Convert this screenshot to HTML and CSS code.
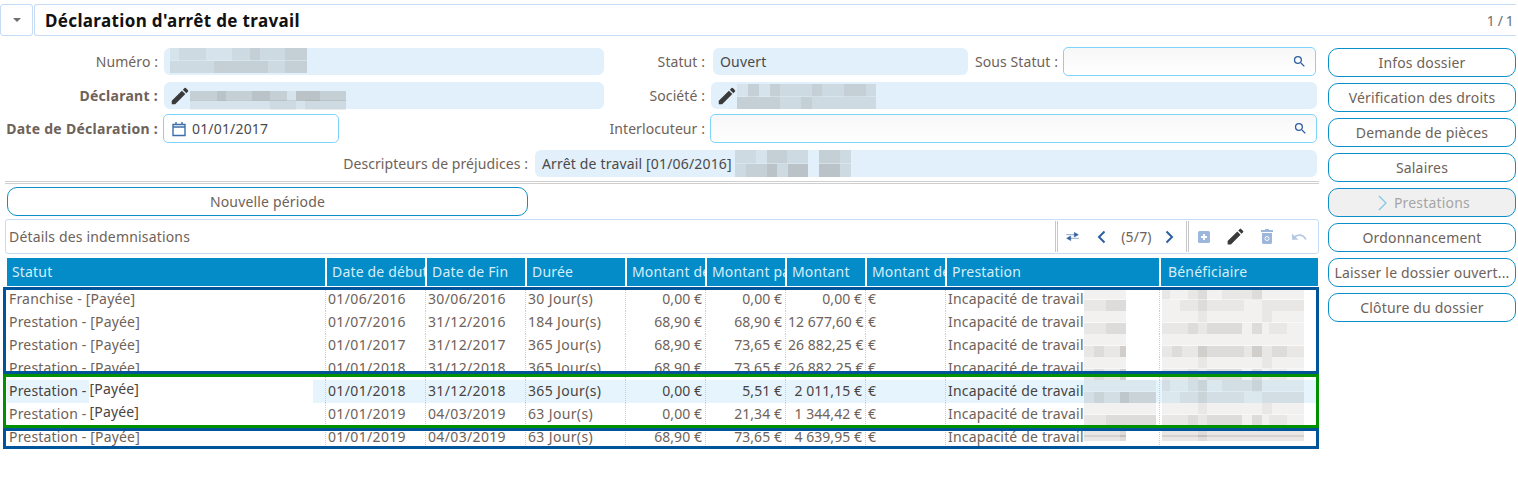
FILE: index.html
```html
<!DOCTYPE html>
<html lang="fr">
<head>
    <meta charset="UTF-8">
    <title>Déclaration d'arrêt de travail</title>
    <link rel="stylesheet" href="styles.css">
</head>
<body>
    <svg class="defs" width="0" height="0">
        <symbol id="i-pencil" viewBox="0 0 24 24"><path d="M3 17.25V21h3.75L17.81 9.94l-3.75-3.75L3 17.25zM20.71 7.04a1 1 0 0 0 0-1.41l-2.34-2.34a1 1 0 0 0-1.41 0l-1.83 1.83 3.75 3.75 1.83-1.83z"/></symbol>
        <symbol id="i-search" viewBox="0 0 24 24"><path d="M15.5 14h-.79l-.28-.27A6.47 6.47 0 0 0 16 9.5 6.5 6.5 0 1 0 9.5 16c1.61 0 3.09-.59 4.23-1.57l.27.28v.79l5 4.99L20.49 19l-4.99-5zm-6 0C7.01 14 5 11.99 5 9.5S7.01 5 9.5 5 14 7.01 14 9.5 11.99 14 9.5 14z"/></symbol>
    </svg>

    <header class="topbar">
        <div class="topbar-toggle"><span class="caret"></span></div>
        <div class="topbar-title">
            <h1>Déclaration d'arrêt de travail</h1>
            <span class="pager-count">1 / 1</span>
        </div>
    </header>

    <div class="layout">
        <main class="content">
            <section class="form">
                <div class="form-row">
                    <label class="lbl lbl-first">Numéro :</label>
                    <div class="field field-wide"><span class="mosaic m-num"></span></div>
                    <label class="lbl lbl-second">Statut :</label>
                    <div class="field field-statut">Ouvert</div>
                    <label class="lbl lbl-sous">Sous Statut :</label>
                    <div class="input input-sous"><svg class="ico-search"><use href="#i-search"/></svg></div>
                </div>
                <div class="form-row">
                    <label class="lbl lbl-first lbl-bold">Déclarant :</label>
                    <div class="field field-wide field-icon">
                        <svg class="ico-pencil"><use href="#i-pencil"/></svg>
                        <span class="mosaic m-decl"></span>
                    </div>
                    <label class="lbl lbl-second">Société :</label>
                    <div class="field field-societe field-icon">
                        <svg class="ico-pencil"><use href="#i-pencil"/></svg>
                        <span class="mosaic m-soc"></span>
                    </div>
                </div>
                <div class="form-row">
                    <label class="lbl lbl-first lbl-bold">Date de Déclaration :</label>
                    <div class="input input-date">
                        <svg class="ico-cal" viewBox="0 0 14 16"><path d="M1 3.5h12v11H1zM1 6h12M4 1v2.5M10 1v2.5" fill="none" stroke="#3d6ea8" stroke-width="1.4"/></svg>
                        01/01/2017
                    </div>
                    <label class="lbl lbl-inter">Interlocuteur :</label>
                    <div class="input input-inter"><svg class="ico-search"><use href="#i-search"/></svg></div>
                </div>
                <div class="form-row">
                    <label class="lbl lbl-desc">Descripteurs de préjudices :</label>
                    <div class="field field-desc">Arrêt de travail [01/06/2016]<span class="mosaic m-desc"></span></div>
                </div>
            </section>

            <div class="sep"></div>

            <button class="btn btn-new">Nouvelle période</button>

            <div class="panel">
                <span class="panel-title">Détails des indemnisations</span>
                <div class="tools tools-nav">
                    <svg class="tool t-swap" viewBox="0 0 14 10"><path d="M0 3h9V0.5L13.5 3 9 5.500V3M14 7H5V4.500L0.500 7 5 9.500V7" fill="#2f5f9f" stroke="#2f5f9f" stroke-width=".6"/></svg>
                    <svg class="tool t-prev" viewBox="0 0 9 14"><path d="M7.500 1.500 2 7l5.500 5.500" fill="none" stroke="#2f5f9f" stroke-width="2"/></svg>
                    <span class="tool-count">(5/7)</span>
                    <svg class="tool t-next" viewBox="0 0 9 14"><path d="M1.500 1.500 7 7l-5.500 5.500" fill="none" stroke="#2f5f9f" stroke-width="2"/></svg>
                </div>
                <div class="tools tools-edit">
                    <svg class="tool t-add" viewBox="0 0 12 12"><rect width="12" height="12" rx="1.500" fill="#9db7dc"/><path d="M6 3v6M3 6h6" stroke="#fff" stroke-width="1.800"/></svg>
                    <svg class="tool t-edit"><use href="#i-pencil"/></svg>
                    <svg class="tool t-trash" viewBox="0 0 12 15"><path d="M4 0h4v1h4v2H0V1h4zM1 4h10v9.500a1.500 1.500 0 0 1-1.500 1.500h-7A1.500 1.500 0 0 1 1 13.500z" fill="#9db7dc"/><circle cx="6" cy="9.500" r="2" fill="none" stroke="#fff"/></svg>
                    <svg class="tool t-undo" viewBox="2 7 21 10"><path fill="#b4c8e4" d="M12.500 8c-2.650 0-5.050.990-6.900 2.600L2 7v9h9l-3.620-3.620c1.390-1.160 3.160-1.880 5.120-1.880 3.540 0 6.550 2.310 7.600 5.500l2.370-.780C21.080 11.030 17.150 8 12.500 8z"/></svg>
                </div>
            </div>

            <div class="grid-wrap">
                <table class="grid">
                    <colgroup>
                        <col class="c-statut"><col class="c-date"><col class="c-date"><col class="c-date">
                        <col class="c-mt"><col class="c-mt"><col class="c-mt"><col class="c-mt">
                        <col class="c-prest"><col class="c-benef">
                    </colgroup>
                    <thead>
                        <tr>
                            <th>Statut</th>
                            <th>Date de début</th>
                            <th>Date de Fin</th>
                            <th>Durée</th>
                            <th>Montant de base</th>
                            <th>Montant payé</th>
                            <th>Montant</th>
                            <th>Montant de la</th>
                            <th>Prestation</th>
                            <th class="th-benef">Bénéficiaire</th>
                        </tr>
                    </thead>
                    <tbody>
                        <tr>
                            <td>Franchise - [Payée]</td><td>01/06/2016</td><td>30/06/2016</td><td>30 Jour(s)</td>
                            <td class="num">0,00 €</td><td class="num">0,00 €</td><td class="num">0,00 €</td><td>€</td>
                            <td>Incapacité de travail<span class="mosaic m-pre m-a"></span></td>
                            <td><span class="mosaic m-ben m-b"></span></td>
                        </tr>
                        <tr>
                            <td>Prestation - [Payée]</td><td>01/07/2016</td><td>31/12/2016</td><td>184 Jour(s)</td>
                            <td class="num">68,90 €</td><td class="num">68,90 €</td><td class="num">12 677,60 €</td><td>€</td>
                            <td>Incapacité de travail<span class="mosaic m-pre m-a"></span></td>
                            <td><span class="mosaic m-ben m-c"></span></td>
                        </tr>
                        <tr>
                            <td>Prestation - [Payée]</td><td>01/01/2017</td><td>31/12/2017</td><td>365 Jour(s)</td>
                            <td class="num">68,90 €</td><td class="num">73,65 €</td><td class="num">26 882,25 €</td><td>€</td>
                            <td>Incapacité de travail<span class="mosaic m-pre m-d"></span></td>
                            <td><span class="mosaic m-ben m-d"></span></td>
                        </tr>
                        <tr>
                            <td>Prestation - [Payée]</td><td>01/01/2018</td><td>31/12/2018</td><td>365 Jour(s)</td>
                            <td class="num">68,90 €</td><td class="num">73,65 €</td><td class="num">26 882,25 €</td><td>€</td>
                            <td>Incapacité de travail<span class="mosaic m-pre m-d"></span></td>
                            <td><span class="mosaic m-ben m-c"></span></td>
                        </tr>
                        <tr class="row-active">
                            <td>Prestation -<span class="paste paste-white">[Payée]</span></td><td>01/01/2018</td><td>31/12/2018</td><td>365 Jour(s)</td>
                            <td class="num">0,00 €</td><td class="num">5,51 €</td><td class="num">2 011,15 €</td><td>€</td>
                            <td>Incapacité de travail<span class="mosaic m-wide m-d"></span></td>
                            <td><span class="mosaic m-ben m-b"></span></td>
                        </tr>
                        <tr>
                            <td>Prestation -<span class="paste">[Payée]</span></td><td>01/01/2019</td><td>04/03/2019</td><td>63 Jour(s)</td>
                            <td class="num">0,00 €</td><td class="num">21,34 €</td><td class="num">1 344,42 €</td><td>€</td>
                            <td>Incapacité de travail<span class="mosaic m-wide m-a"></span></td>
                            <td><span class="mosaic m-ben m-c"></span></td>
                        </tr>
                        <tr>
                            <td>Prestation - [Payée]</td><td>01/01/2019</td><td>04/03/2019</td><td>63 Jour(s)</td>
                            <td class="num">68,90 €</td><td class="num">73,65 €</td><td class="num">4 639,95 €</td><td>€</td>
                            <td>Incapacité de travail<span class="mosaic m-pre m-low"></span></td>
                            <td><span class="mosaic m-ben m-low"></span></td>
                        </tr>
                    </tbody>
                </table>
                <div class="frame frame-top"></div>
                <div class="frame frame-bottom"></div>
                <div class="frame frame-green"></div>
            </div>
        </main>

        <aside class="actions">
            <button class="btn">Infos dossier</button>
            <button class="btn">Vérification des droits</button>
            <button class="btn">Demande de pièces</button>
            <button class="btn">Salaires</button>
            <button class="btn btn-off">
                <svg class="ico-chev" viewBox="0 0 9 16"><path d="M1 1l7 7-7 7" fill="none" stroke="#7fc4ea" stroke-width="1.200"/></svg>
                Prestations
            </button>
            <button class="btn">Ordonnancement</button>
            <button class="btn">Laisser le dossier ouvert...</button>
            <button class="btn">Clôture du dossier</button>
        </aside>
    </div>
</body>
</html>
```

FILE: styles.css
```css
* {
    box-sizing: border-box;
}

body {
    margin: 0;
    background: #fff;
    font-family: "Noto Sans", sans-serif;
    font-size: 14px;
    letter-spacing: .17px;
    color: #6e6259;
    overflow: hidden;
}

.defs {
    position: absolute;
}

/* top bar */
.topbar {
    display: flex;
    width: 1516px;
    height: 32px;
    margin-top: 4px;
    gap: 1px;
}

.topbar-toggle {
    width: 33px;
    border: 1px solid #c6dcf5;
    border-radius: 3px;
    display: flex;
    align-items: center;
    justify-content: center;
}

.caret {
    width: 0;
    height: 0;
    border-left: 4px solid transparent;
    border-right: 4px solid transparent;
    border-top: 4px solid #6e6e6e;
}

.topbar-title {
    flex: 1;
    display: flex;
    align-items: center;
    justify-content: space-between;
    border: 1px solid #c6dcf5;
    border-right: 0;
    border-radius: 3px 0 0 3px;
    padding: 0 2px 0 10px;
}

.topbar-title h1 {
    margin: 0;
    font-size: 17px;
    font-weight: 700;
    letter-spacing: .35px;
    color: #111;
}

.pager-count {
    color: #6e6e6e;
    word-spacing: -1px;
}

.layout {
    display: flex;
}

.content {
    width: 1328px;
}

/* form */
.form {
    display: grid;
    grid-template-rows: 34px 33px 35px 29px;
    margin-top: 11px;
    height: 131px;
}

.form-row {
    display: flex;
    align-items: center;
    height: 29px;
}

.lbl {
    text-align: right;
    white-space: nowrap;
    flex: none;
    letter-spacing: .08px;
}

.lbl-bold {
    font-weight: 700;
    letter-spacing: .28px;
}

.lbl-first {
    width: 158px;
    margin-right: 6px;
}

.lbl-second {
    width: 101px;
    margin-right: 8px;
}

.lbl-sous {
    width: 84px;
    margin-left: 6px;
    margin-right: 5px;
}

.lbl-inter {
    width: 366px;
    margin-right: 5px;
}

.lbl-desc {
    width: 528px;
    margin-right: 7px;
}

.field {
    display: flex;
    height: 27px;
    background: #e1f0fa;
    border-radius: 6px;
    line-height: 27px;
    color: #4a4a4a;
    padding-left: 6px;
    flex: none;
    white-space: nowrap;
}

.field-wide {
    width: 440px;
}

.field-statut {
    width: 255px;
    padding-left: 7px;
}

.field-societe {
    width: 606px;
    margin-left: -2px;
}

.field-desc {
    width: 782px;
    padding-left: 7px;
}

.field-icon {
    align-items: center;
    padding-left: 5px;
}

.input {
    height: 29px;
    border: 1px solid #7fd4fb;
    border-radius: 5px;
    background: linear-gradient(#f7f7f7, #fff);
    display: flex;
    align-items: center;
    justify-content: flex-end;
    flex: none;
    color: #4a4a4a;
}

.input-sous {
    width: 253px;
}

.input-inter {
    width: 607px;
}

.input-date {
    width: 176px;
    margin-left: -1px;
    background: #fff;
    justify-content: flex-start;
    padding-left: 8px;
}

.ico-search {
    width: 15px;
    height: 15px;
    fill: #2f5f9f;
    margin-right: 8px;
}

.ico-pencil {
    width: 22px;
    height: 22px;
    fill: #3a3a3a;
    flex: none;
    margin-right: -1px;
}

.ico-cal {
    width: 14px;
    height: 16px;
    margin-right: 6px;
}

/* blurred values */
.mosaic {
    --a: rgba(70, 60, 50, .07);
    --b: rgba(70, 60, 50, .12);
    --c: rgba(70, 60, 50, .18);
    --d: rgba(70, 60, 50, .25);
    display: inline-block;
    flex: none;
    height: 23px;
    vertical-align: top;
    background-repeat: no-repeat;
    background-size: 100% 50%;
    background-position: 0 0, 0 100%;
}

.m-num {
    width: 137px;
    height: 25px;
    align-self: flex-start;
    background-image:
        linear-gradient(90deg, var(--a) 0 9px, var(--b) 9px 36px, var(--a) 36px 62px, var(--b) 62px 80px, var(--c) 80px 90px, var(--b) 90px 115px, var(--c) 115px 137px),
        linear-gradient(90deg, var(--b) 0 44px, var(--c) 44px 98px, var(--b) 98px 115px, var(--c) 115px 137px);
}

.m-decl {
    width: 156px;
    height: 29px;
    background-size: 100% 34%;
    background-position: 0 50%, 0 100%;
    background-image:
        linear-gradient(90deg, var(--c) 0 27px, var(--d) 27px 36px, var(--c) 36px 62px, var(--d) 62px 80px, var(--c) 80px 97px, var(--a) 97px 106px, var(--d) 106px 130px, var(--c) 130px 156px),
        linear-gradient(90deg, var(--a) 0 80px, var(--b) 80px 106px, var(--a) 106px 115px, var(--b) 115px 156px);
}

.m-soc {
    width: 139px;
    height: 25px;
    align-self: flex-end;
    background-image:
        linear-gradient(90deg, var(--a) 0 11px, var(--c) 11px 22px, var(--a) 22px 33px, var(--c) 33px 43px, var(--b) 43px 75px, var(--c) 75px 85px, var(--b) 85px 107px, var(--c) 107px 129px, var(--b) 129px 139px),
        linear-gradient(90deg, var(--c) 0 43px, var(--b) 43px 64px, var(--c) 64px 75px, var(--b) 75px 139px);
}

.m-desc {
    width: 116px;
    height: 27px;
    margin-left: 3px;
    background-image:
        linear-gradient(90deg, var(--b) 0 21px, var(--a) 21px 32px, var(--c) 32px 52px, var(--b) 52px 73px, transparent 73px 84px, var(--c) 84px 105px, var(--b) 105px 116px),
        linear-gradient(90deg, var(--b) 0 11px, var(--c) 11px 32px, var(--d) 32px 42px, var(--b) 42px 53px, var(--d) 53px 73px, transparent 73px 84px, var(--d) 84px 105px, var(--b) 105px 116px);
}

.m-pre {
    width: 42px;
}

.m-wide {
    width: 72px;
}

.m-ben {
    width: 142px;
}

.m-a {
    background-image:
        linear-gradient(90deg, var(--a) 0 100%),
        linear-gradient(90deg, var(--b) 0 22px, var(--c) 22px 100%);
}

.m-b {
    background-image:
        linear-gradient(90deg, var(--b) 0 8px, var(--a) 8px 26px, var(--b) 26px 36px, var(--c) 36px 45px, var(--a) 45px 60px, var(--b) 60px 90px, var(--c) 90px 100px, var(--a) 100px 142px),
        linear-gradient(90deg, var(--a) 0 18px, var(--b) 18px 36px, var(--c) 36px 45px, var(--b) 45px 82px, var(--a) 82px 100px, var(--b) 100px 142px);
}

.m-c {
    background-image:
        linear-gradient(90deg, var(--a) 0 36px, var(--b) 36px 45px, var(--a) 45px 100px, var(--b) 100px 110px, var(--a) 110px 142px),
        linear-gradient(90deg, var(--b) 0 26px, var(--c) 26px 36px, var(--b) 36px 45px, var(--c) 45px 80px, var(--a) 80px 90px, var(--c) 90px 100px, var(--a) 100px 107px, var(--b) 107px 125px, var(--a) 125px 142px);
}

.m-d {
    background-image:
        linear-gradient(90deg, var(--a) 0 100%),
        linear-gradient(90deg, var(--b) 0 10px, var(--c) 10px 20px, var(--b) 20px 36px, var(--d) 36px 45px, var(--c) 45px 82px, var(--b) 82px 90px, var(--d) 90px 100px, var(--b) 100px 110px, var(--c) 110px 125px, var(--b) 125px 142px);
}

.m-low {
    background-image:
        linear-gradient(90deg, var(--b) 0 36px, var(--c) 36px 45px, var(--b) 45px 142px),
        linear-gradient(90deg, var(--b) 0 36px, var(--c) 36px 45px, var(--b) 45px 142px);
    background-size: 100% 26%;
    background-position: 0 30%, 0 55%;
}

.sep {
    height: 3px;
    width: 1314px;
    margin: 3px 0 3px 5px;
    border-top: 1px solid #cfcfcf;
    border-bottom: 1px solid #cfcfcf;
}

/* buttons */
.btn {
    display: block;
    height: 29px;
    width: 188px;
    padding: 0;
    background: #fff;
    border: 1px solid #0a8fc8;
    border-radius: 10px;
    font: inherit;
    letter-spacing: inherit;
    color: #6e6259;
    text-align: center;
    white-space: nowrap;
}

.btn-new {
    width: 521px;
    margin-left: 7px;
}

.btn-off {
    background: #f0f0f0;
    color: #a5a5a5;
    padding-left: 4px;
}

.ico-chev {
    width: 9px;
    height: 16px;
    margin-right: 3px;
    vertical-align: -3px;
}

.actions {
    display: flex;
    flex-direction: column;
    gap: 6px;
    margin-top: 12px;
}

/* panel above the table */
.panel {
    display: flex;
    align-items: center;
    width: 1314px;
    height: 35px;
    margin: 3px 0 4px 5px;
    border: 1px solid #c6dcf5;
    border-radius: 3px;
    padding-left: 3px;
}

.panel-title {
    flex: 1;
}

.tools {
    display: flex;
    align-items: center;
    height: 31px;
    flex: none;
    border-left: 3px double #c8c8c8;
}

.tool {
    flex: none;
}

.tools-nav {
    width: 131px;
    margin-left: -1px;
}

.tools-edit {
    width: 132px;
}

.t-swap {
    width: 13px;
    height: 9px;
    margin: 0 18px 0 8px;
}

.t-prev, .t-next {
    width: 9px;
    height: 14px;
}

.tool-count {
    width: 31px;
    margin: 0 13px 0 15px;
    text-align: center;
    white-space: nowrap;
}

.t-add {
    width: 12px;
    height: 12px;
    margin: 0 15px 0 9px;
}

.t-edit {
    width: 21px;
    height: 21px;
    fill: #3a3a3a;
    margin-right: 15px;
}

.t-trash {
    width: 12px;
    height: 15px;
    margin-right: 19px;
}

.t-undo {
    width: 15px;
    height: 8px;
}

/* table */
.grid-wrap {
    position: relative;
    margin-left: 7px;
}

.grid {
    width: 1311px;
    table-layout: fixed;
    border-collapse: separate;
    border-spacing: 0;
}

.c-statut { width: 318px; }
.c-date { width: 100px; }
.c-mt { width: 80px; }
.c-prest { width: 214px; }
.c-benef { width: 159px; }

.grid th {
    height: 30px;
    padding: 0 0 2px 5px;
    background: #038cc8;
    background-clip: padding-box;
    border-bottom: 2px solid #fff;
    border-left: 2px solid #fff;
    color: #d5eefb;
    font-weight: 400;
    text-align: left;
    white-space: nowrap;
    overflow: hidden;
}

.grid th:first-child {
    border-left: 0;
}

.grid .th-benef {
    padding-left: 7px;
}

.grid td {
    height: 23px;
    padding: 0 3px 0 2px;
    line-height: 21px;
    vertical-align: top;
    border-left: 1px dotted #b3d5e8;
    white-space: nowrap;
    overflow: hidden;
}

.grid td:first-child {
    border-left: 0;
}

.grid td:nth-child(n+2):nth-child(-n+4) {
    letter-spacing: .35px;
}

.grid .num {
    text-align: right;
    letter-spacing: .05px;
}

.row-active td {
    background: #e6f5fd;
    color: #4a4340;
}

.paste {
    display: inline-block;
    margin-left: 3px;
    height: 23px;
    line-height: 18px;
    vertical-align: top;
    color: #4a4340;
}

.paste-white {
    width: 224px;
    background: #fff;
}

/* annotation frames drawn over the table */
.frame {
    position: absolute;
    left: -4px;
    width: 1316px;
    border: 3px solid #00549a;
    pointer-events: none;
}

.frame-top {
    top: 29px;
    height: 87px;
}

.frame-bottom {
    top: 170px;
    height: 21px;
}

.frame-green {
    top: 116px;
    height: 54px;
    border-color: #009000;
}
```
